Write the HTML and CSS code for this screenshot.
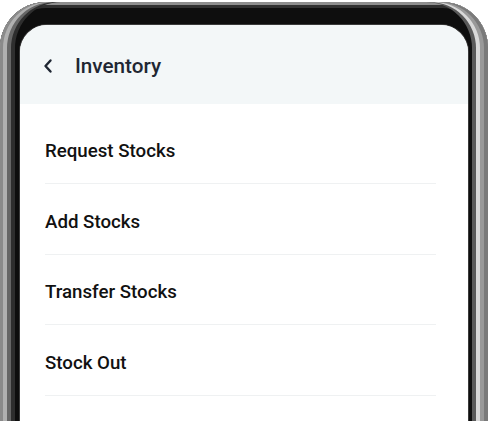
FILE: index.html
```
<!DOCTYPE html>
<html>
<head>
<meta charset="utf-8">
<link rel="stylesheet" href="styles.css">
</head>
<body>
<div class="phone">
  <div class="screen">
    <header class="topbar">
      <svg class="back" width="12" height="16" viewBox="0 0 12 16"><path d="M8.5 2.5 L3.5 8 L8.5 13.5" fill="none" stroke="#1f2733" stroke-width="2.4" stroke-linecap="round" stroke-linejoin="round"/></svg>
      <span class="title">Inventory</span>
    </header>
    <ul class="menu">
      <li class="item">Request Stocks</li>
      <li class="item">Add Stocks</li>
      <li class="item">Transfer Stocks</li>
      <li class="item">Stock Out</li>
      <li class="item"></li>
    </ul>
  </div>
</div>
</body>
</html>
```

FILE: styles.css
```
html, body {
  margin: 0;
  padding: 0;
  background: #ffffff;
  overflow: hidden;
}
body {
  width: 489px;
  height: 421px;
  font-family: Roboto, "Liberation Sans", sans-serif;
}
.phone {
  box-sizing: border-box;
  width: 488px;
  height: 430px;
  margin-top: 2px;
  border-radius: 46px 46px 0 0;
  background: #0e0e0e;
  box-shadow:
    inset 3px 0 0 #8a8a8a,
    inset 7px 0 0 #b0b0b0,
    inset 11px 0 0 #666,
    inset 15px 0 0 #2e2e2e,
    inset -4px 0 0 #7a7a7a,
    inset -8px 0 0 #999,
    inset -12px 0 0 #d8d8d8,
    inset -16px 0 0 #5a5a5a,
    inset 0 3px 0 #8e8e8e,
    inset 0 6px 0 #303030;
  padding: 23px 20px 0 20px;
}
.screen {
  background: #ffffff;
  border-radius: 27px 27px 0 0;
  height: 100%;
  overflow: hidden;
  box-shadow: 0 0 0 1px #3a3a3a;
}
.topbar {
  height: 79px;
  background: #f3f7f8;
  display: flex;
  align-items: center;
  padding-left: 22px;
  box-sizing: border-box;
  padding-top: 2px;
}
.back {
  display: block;
  margin-right: 21px;
}
.title {
  font-size: 20.7px;
  font-weight: 500;
  color: #1f2733;
}
.menu {
  list-style: none;
  margin: 0;
  padding: 9.5px 32px 0 25px;
}
.item {
  box-sizing: border-box;
  height: 70.5px;
  border-bottom: 1px solid #eff1f2;
  display: flex;
  align-items: center;
  padding-top: 6px;
  font-size: 18.7px;
  font-weight: 500;
  color: #111111;
}
```
